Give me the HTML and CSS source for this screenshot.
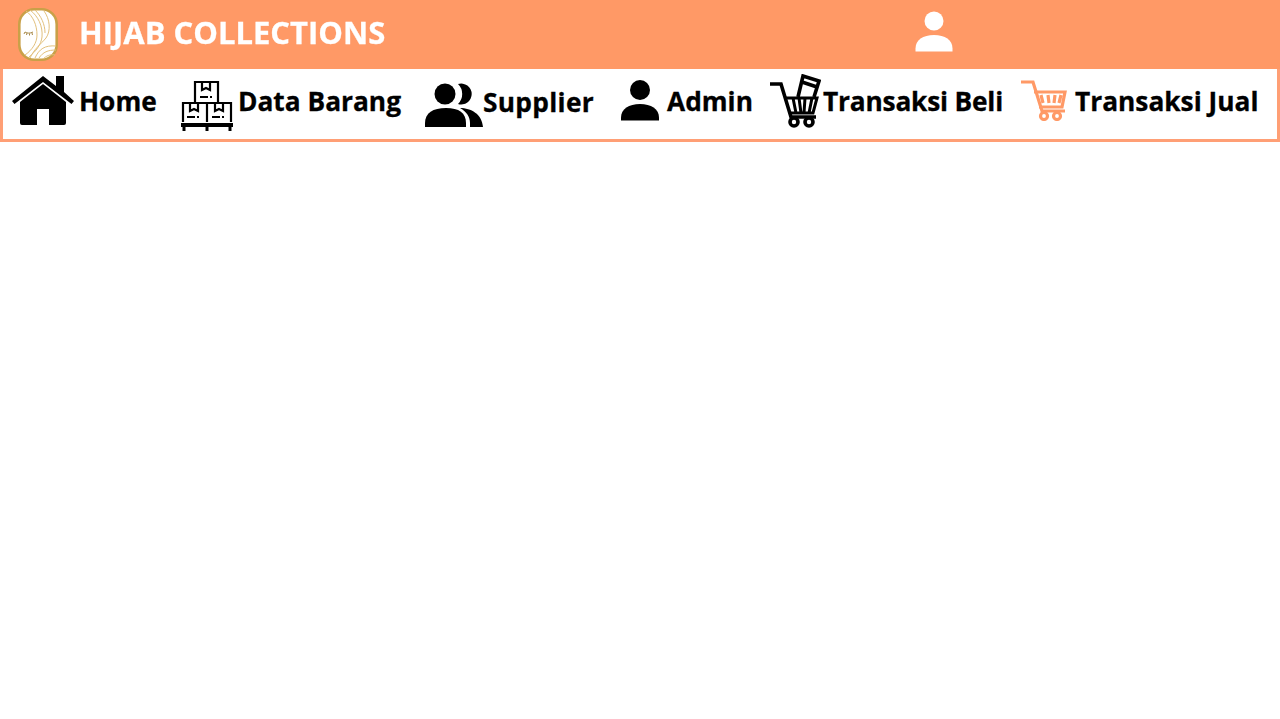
FILE: index.html
```html
<!DOCTYPE html>
<html lang="id">
<head>
<meta charset="utf-8">
<title>Hijab Collections</title>
<link rel="stylesheet" href="styles.css">
</head>
<body>
<header class="topbar">
  <div class="brand">
    <svg class="logo" width="40" height="53" viewBox="0 0 40 53" fill="none" stroke="#e2c07c" stroke-width="1">
      <rect x="1.300" y="1.300" width="37.400" height="50.400" rx="15" fill="#fff" stroke="#c9a048" stroke-width="2.600"/>
      <path d="M8 3c7 5 11 14 11 24 0 8-5 15-12 20"/>
      <path d="M12 2c8 6 13 16 12 27-1 8-6 14-13 20"/>
      <path d="M17 2c6 6 10 14 10 23"/>
      <path d="M26 3c6 8 7 20 2 27-5 6-12 11-16 20"/>
      <path d="M17 50c4-9 10-13 21-12"/>
      <path d="M21 50c4-6 9-8 17-8"/>
      <path d="M25 51c3-3 7-5 12-4"/>
      <path d="M7 24c2.500 1.500 5 1.500 8 0M7 24l-1 2M9 25l-.5 2M11.500 25.500v2M14 25l.5 2" stroke="#a88a4a"/>
    </svg>
    <h1 class="brand-name">HIJAB COLLECTIONS</h1>
  </div>
  <svg class="user-icon" width="38" height="41" viewBox="0 0 38 41" fill="#fff">
    <circle cx="19" cy="10" r="9.500"/>
    <path d="M.5 40.500v-3C.5 29 8 24 19 24s18.500 5 18.500 13.500v3z"/>
  </svg>
</header>
<nav class="menu">
  <a class="item" href="#">
    <svg class="icon icon-home" width="62" height="50" viewBox="0 0 62 50">
      <path d="M44 0h8v16l10 9-2.500 3L31 6 2.500 28 0 25 31 0l13 10z"/>
      <path d="M31 8l23 18v21a2 2 0 0 1-2 2H37V33H25v16H10a2 2 0 0 1-2-2V26z"/>
    </svg>
    <span>Home</span>
  </a>
  <a class="item" href="#">
    <svg class="icon icon-boxes" width="52" height="50" viewBox="0 0 52 50">
      <path d="M14 21V1h23v20"/>
      <path d="M21 1v8l4-2 4 2V1M19 16h8M29 16h2"/>
      <path d="M2 41V22h24v19M26 41V22h24v19"/>
      <path d="M9 22v8l4-2 4 2v-8M34 22v8l4-2 4 2v-8M6 36h8M16 36h2M31 36h8M41 36h2"/>
      <path class="pallet" d="M0 44h52"/>
      <path class="pallet-foot" d="M3 45v5M26 45v5M49 45v5"/>
    </svg>
    <span>Data Barang</span>
  </a>
  <a class="item item-supplier" href="#">
    <svg class="icon icon-people" width="58" height="44" viewBox="0 0 58 44">
      <circle cx="20" cy="11" r="10.500"/>
      <path d="M0 44v-4C0 30 8 25 21 25s20 5 20 15v4z"/>
      <path d="M33 1a10.500 10.500 0 1 1 0 20 14 14 0 0 0 0-20z"/>
      <path d="M35 25c11 0 22 6 23 19H45v-4c0-6-3-11-10-15z"/>
    </svg>
    <span>Supplier</span>
  </a>
  <a class="item" href="#">
    <svg class="icon icon-admin" width="38" height="41" viewBox="0 0 38 41">
      <circle cx="19" cy="10" r="10"/>
      <path d="M0 40.500v-3C0 29 8 24 19 24s19 5 19 13.500v3z"/>
    </svg>
    <span>Admin</span>
  </a>
  <a class="item item-beli" href="#">
    <svg class="icon icon-beli" width="52" height="54" viewBox="0 0 52 54">
      <path d="M1 10h11l10 33h25"/>
      <path class="thin" d="M17 24h31l-4 15H22M24 24l3 15M30 24l2 15M36 24l-1 15M43 24l-3 15"/>
      <path d="M29 23l5-21 16 5-5 16M33 8l15 5"/>
      <circle cx="25" cy="48" r="4"/>
      <circle cx="40" cy="48" r="4"/>
    </svg>
    <span>Transaksi Beli</span>
  </a>
  <a class="item" href="#">
    <svg class="icon icon-jual" width="46" height="41" viewBox="0 0 46 41">
      <path d="M0 2h12l9 29h23"/>
      <path d="M13 12h31l-3 15H18M20 15l2 8M27 15l1 8M34 15l-1 8M40 15l-2 8"/>
      <circle cx="23" cy="36" r="3.500"/>
      <circle cx="36" cy="36" r="3.500"/>
    </svg>
    <span>Transaksi Jual</span>
  </a>
</nav>
</body>
</html>
```

FILE: styles.css
```css
* {
  box-sizing: border-box;
}

html,
body {
  margin: 0;
  background: #fff;
  font-family: "Open Sans", "Noto Sans", sans-serif;
}

.topbar {
  display: grid;
  grid-template-columns: 915px 1fr;
  align-items: center;
  height: 69px;
  background: #ff9966;
}

.brand {
  display: flex;
  align-items: center;
  padding-left: 18px;
  gap: 21px;
}

.logo {
  display: block;
  flex: none;
}

.brand-name {
  margin: 0;
  padding-bottom: 5px;
  color: #fff;
  font-size: 31px;
  font-weight: 700;
  white-space: nowrap;
  line-height: 1;
  -webkit-text-stroke: 0.3px #fff;
  filter: blur(0.3px);
}

.user-icon {
  display: block;
  margin-bottom: 7px;
  filter: blur(0.3px);
}

.menu {
  display: grid;
  grid-template-columns: 169px 244px 196px 148px 252px 1fr;
  align-items: center;
  height: 73px;
  padding: 0 0 7px 9px;
  border: 3px solid #ff9f75;
  border-top: 0;
}

.item {
  display: flex;
  align-items: center;
  color: #000;
  text-decoration: none;
  font-size: 26.300px;
  font-weight: 700;
  white-space: nowrap;
  -webkit-text-stroke: 0.3px #000;
}

.item-supplier span {
  padding-top: 2px;
  letter-spacing: 0.3px;
}

.item-beli span {
  letter-spacing: -0.2px;
}

.icon {
  display: block;
  flex: none;
  filter: blur(0.3px);
}

.icon-home {
  margin-right: 5px;
  fill: #000;
}

.icon-boxes {
  margin-top: 10px;
  margin-right: 5px;
  fill: none;
  stroke: #000;
  stroke-width: 2.200;
}

.pallet {
  stroke-width: 4;
}

.pallet-foot {
  stroke-width: 3;
}

.icon-people {
  margin-top: 8px;
  fill: #000;
}

.icon-admin {
  margin-right: 8px;
  fill: #000;
}

.icon-beli {
  margin-right: 2px;
  fill: none;
  stroke: #000;
  stroke-width: 3.600;
}

.thin {
  stroke-width: 3;
}

.icon-jual {
  margin-right: 8px;
  fill: none;
  stroke: #ff9966;
  stroke-width: 3.200;
}
```
